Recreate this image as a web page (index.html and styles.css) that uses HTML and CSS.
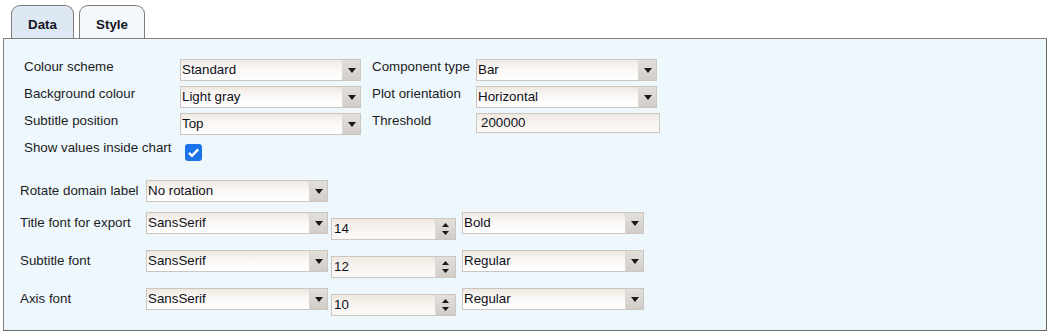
FILE: index.html
```html
<!DOCTYPE html>
<html>
<head>
<meta charset="utf-8">
<link rel="stylesheet" href="styles.css">
</head>
<body>
<div class="page">
  <div class="tabs">
    <div class="tab tab-data">Data</div>
    <div class="tab tab-style">Style</div>
  </div>
  <div class="panel">
    <div class="grid-top">
      <span class="lbl">Colour scheme</span>
      <div class="select"><span class="val">Standard</span><span class="arrow"><svg width="8" height="5" viewBox="0 0 8 5"><path d="M0 0H8L4 5Z" fill="#1a1a1a"/></svg></span></div>
      <span class="lbl lbl-r">Component type</span>
      <div class="select"><span class="val">Bar</span><span class="arrow"><svg width="8" height="5" viewBox="0 0 8 5"><path d="M0 0H8L4 5Z" fill="#1a1a1a"/></svg></span></div>

      <span class="lbl">Background colour</span>
      <div class="select"><span class="val">Light gray</span><span class="arrow"><svg width="8" height="5" viewBox="0 0 8 5"><path d="M0 0H8L4 5Z" fill="#1a1a1a"/></svg></span></div>
      <span class="lbl lbl-r">Plot orientation</span>
      <div class="select"><span class="val">Horizontal</span><span class="arrow"><svg width="8" height="5" viewBox="0 0 8 5"><path d="M0 0H8L4 5Z" fill="#1a1a1a"/></svg></span></div>

      <span class="lbl">Subtitle position</span>
      <div class="select"><span class="val">Top</span><span class="arrow"><svg width="8" height="5" viewBox="0 0 8 5"><path d="M0 0H8L4 5Z" fill="#1a1a1a"/></svg></span></div>
      <span class="lbl lbl-r">Threshold</span>
      <div class="textfield">200000</div>

      <span class="lbl">Show values inside chart</span>
      <span class="check"><svg width="17" height="17" viewBox="0 0 17 17"><rect x="0" y="0" width="17" height="17" rx="3" fill="#1a73e8"/><path d="M4 8.8L7 11.8L13.2 5.4" fill="none" stroke="#fff" stroke-width="2.4"/></svg></span>
    </div>

    <div class="fonts">
      <div class="frow">
        <span class="flbl">Rotate domain label</span>
        <div class="select"><span class="val">No rotation</span><span class="arrow"><svg width="8" height="5" viewBox="0 0 8 5"><path d="M0 0H8L4 5Z" fill="#1a1a1a"/></svg></span></div>
      </div>
      <div class="frow">
        <span class="flbl">Title font for export</span>
        <div class="select"><span class="val">SansSerif</span><span class="arrow"><svg width="8" height="5" viewBox="0 0 8 5"><path d="M0 0H8L4 5Z" fill="#1a1a1a"/></svg></span></div>
        <div class="spinner"><span class="val">14</span><span class="spin"><svg width="7" height="4" viewBox="0 0 7 4"><path d="M0 4H7L3.5 0Z" fill="#1a1a1a"/></svg><svg width="7" height="4" viewBox="0 0 7 4"><path d="M0 0H7L3.5 4Z" fill="#1a1a1a"/></svg></span></div>
        <div class="select sel-style"><span class="val">Bold</span><span class="arrow"><svg width="8" height="5" viewBox="0 0 8 5"><path d="M0 0H8L4 5Z" fill="#1a1a1a"/></svg></span></div>
      </div>
      <div class="frow">
        <span class="flbl">Subtitle font</span>
        <div class="select"><span class="val">SansSerif</span><span class="arrow"><svg width="8" height="5" viewBox="0 0 8 5"><path d="M0 0H8L4 5Z" fill="#1a1a1a"/></svg></span></div>
        <div class="spinner"><span class="val">12</span><span class="spin"><svg width="7" height="4" viewBox="0 0 7 4"><path d="M0 4H7L3.5 0Z" fill="#1a1a1a"/></svg><svg width="7" height="4" viewBox="0 0 7 4"><path d="M0 0H7L3.5 4Z" fill="#1a1a1a"/></svg></span></div>
        <div class="select sel-style"><span class="val">Regular</span><span class="arrow"><svg width="8" height="5" viewBox="0 0 8 5"><path d="M0 0H8L4 5Z" fill="#1a1a1a"/></svg></span></div>
      </div>
      <div class="frow">
        <span class="flbl">Axis font</span>
        <div class="select"><span class="val">SansSerif</span><span class="arrow"><svg width="8" height="5" viewBox="0 0 8 5"><path d="M0 0H8L4 5Z" fill="#1a1a1a"/></svg></span></div>
        <div class="spinner"><span class="val">10</span><span class="spin"><svg width="7" height="4" viewBox="0 0 7 4"><path d="M0 4H7L3.5 0Z" fill="#1a1a1a"/></svg><svg width="7" height="4" viewBox="0 0 7 4"><path d="M0 0H7L3.5 4Z" fill="#1a1a1a"/></svg></span></div>
        <div class="select sel-style"><span class="val">Regular</span><span class="arrow"><svg width="8" height="5" viewBox="0 0 8 5"><path d="M0 0H8L4 5Z" fill="#1a1a1a"/></svg></span></div>
      </div>
    </div>
  </div>
</div>
</body>
</html>
```

FILE: styles.css
```css
* { box-sizing: border-box; }

html, body {
  margin: 0;
  background: #ffffff;
}

body {
  font-family: "Liberation Sans", Arial, sans-serif;
  font-size: 13.33px;
  color: #1c1c24;
}

.page {
  padding: 5px 6px 4px 3px;
}

.tabs {
  display: flex;
  gap: 5px;
  margin-left: 8px;
  height: 33px;
}

.tab {
  height: 33px;
  border: 1px solid #7d7d7d;
  border-bottom: 0;
  border-radius: 9px 9px 0 0;
  font-weight: bold;
  text-align: center;
  padding-top: 11px;
  line-height: 16px;
  color: #14141e;
}

.tab-data {
  width: 63px;
  background: #dde8f4;
}

.tab-style {
  width: 66px;
  background: #f3f8fc;
}

.panel {
  height: 293px;
  border: 1px solid #7f7f7f;
  border-right-color: #6a6a6a;
  border-bottom-color: #6a6a6a;
  background: #eef7fb;
  padding: 20px 16px 0 16px;
}

.grid-top {
  margin-left: 4px;
  display: grid;
  grid-template-columns: 156px 181px 115px 184px;
  grid-auto-rows: 22px;
  row-gap: 5px;
}

.lbl {
  line-height: 16px;
  white-space: nowrap;
}

.lbl-r {
  padding-left: 11px;
}

.select {
  display: flex;
  height: 22px;
  width: 181px;
  border: 1px solid #cbc6c0;
  background: linear-gradient(to bottom, #efe8e1 0%, #faf8f6 45%, #ffffff 100%);
}

.select .val {
  flex: 1;
  padding-left: 1px;
  line-height: 20px;
  color: #101018;
  white-space: nowrap;
  overflow: hidden;
}

.select .arrow {
  width: 18px;
  display: flex;
  align-items: center;
  justify-content: center;
  background: linear-gradient(to bottom, #e3dfdb 0%, #d2cdc8 100%);
  border-left: 1px solid #dcd7d2;
}

.select .arrow svg {
  display: block;
}

.textfield {
  height: 20px;
  width: 184px;
  border: 1px solid #cbc6c0;
  background: linear-gradient(to bottom, #efe8e1 0%, #f8f4f0 50%, #fbf9f7 100%);
  padding-left: 4px;
  line-height: 18px;
  color: #101018;
}

.check {
  display: block;
  margin-left: 5px;
  margin-top: 4px;
  width: 17px;
  height: 17px;
}

.check svg {
  display: block;
}

.fonts {
  margin-top: 18px;
  display: flex;
  flex-direction: column;
  gap: 10px;
}

.frow {
  display: flex;
  align-items: flex-start;
}

.flbl {
  width: 126px;
  margin-top: 3px;
  line-height: 16px;
  white-space: nowrap;
}

.frow .select {
  width: 182px;
}

.frow .sel-style {
  width: 182px;
  margin-left: 6px;
}

.spinner {
  display: flex;
  margin-left: 3px;
  margin-top: 6px;
  width: 125px;
  height: 22px;
  border: 1px solid #cbc6c0;
  background: linear-gradient(to bottom, #efe8e1 0%, #f8f4f0 50%, #fbf9f7 100%);
}

.spinner .val {
  flex: 1;
  padding-left: 2px;
  line-height: 20px;
  color: #101018;
}

.spinner .spin {
  width: 20px;
  display: flex;
  flex-direction: column;
  align-items: center;
  justify-content: center;
  gap: 4px;
  background: linear-gradient(to bottom, #e3dfdb 0%, #d2cdc8 100%);
  border-left: 1px solid #dcd7d2;
}

.spinner .spin svg {
  display: block;
}
```
